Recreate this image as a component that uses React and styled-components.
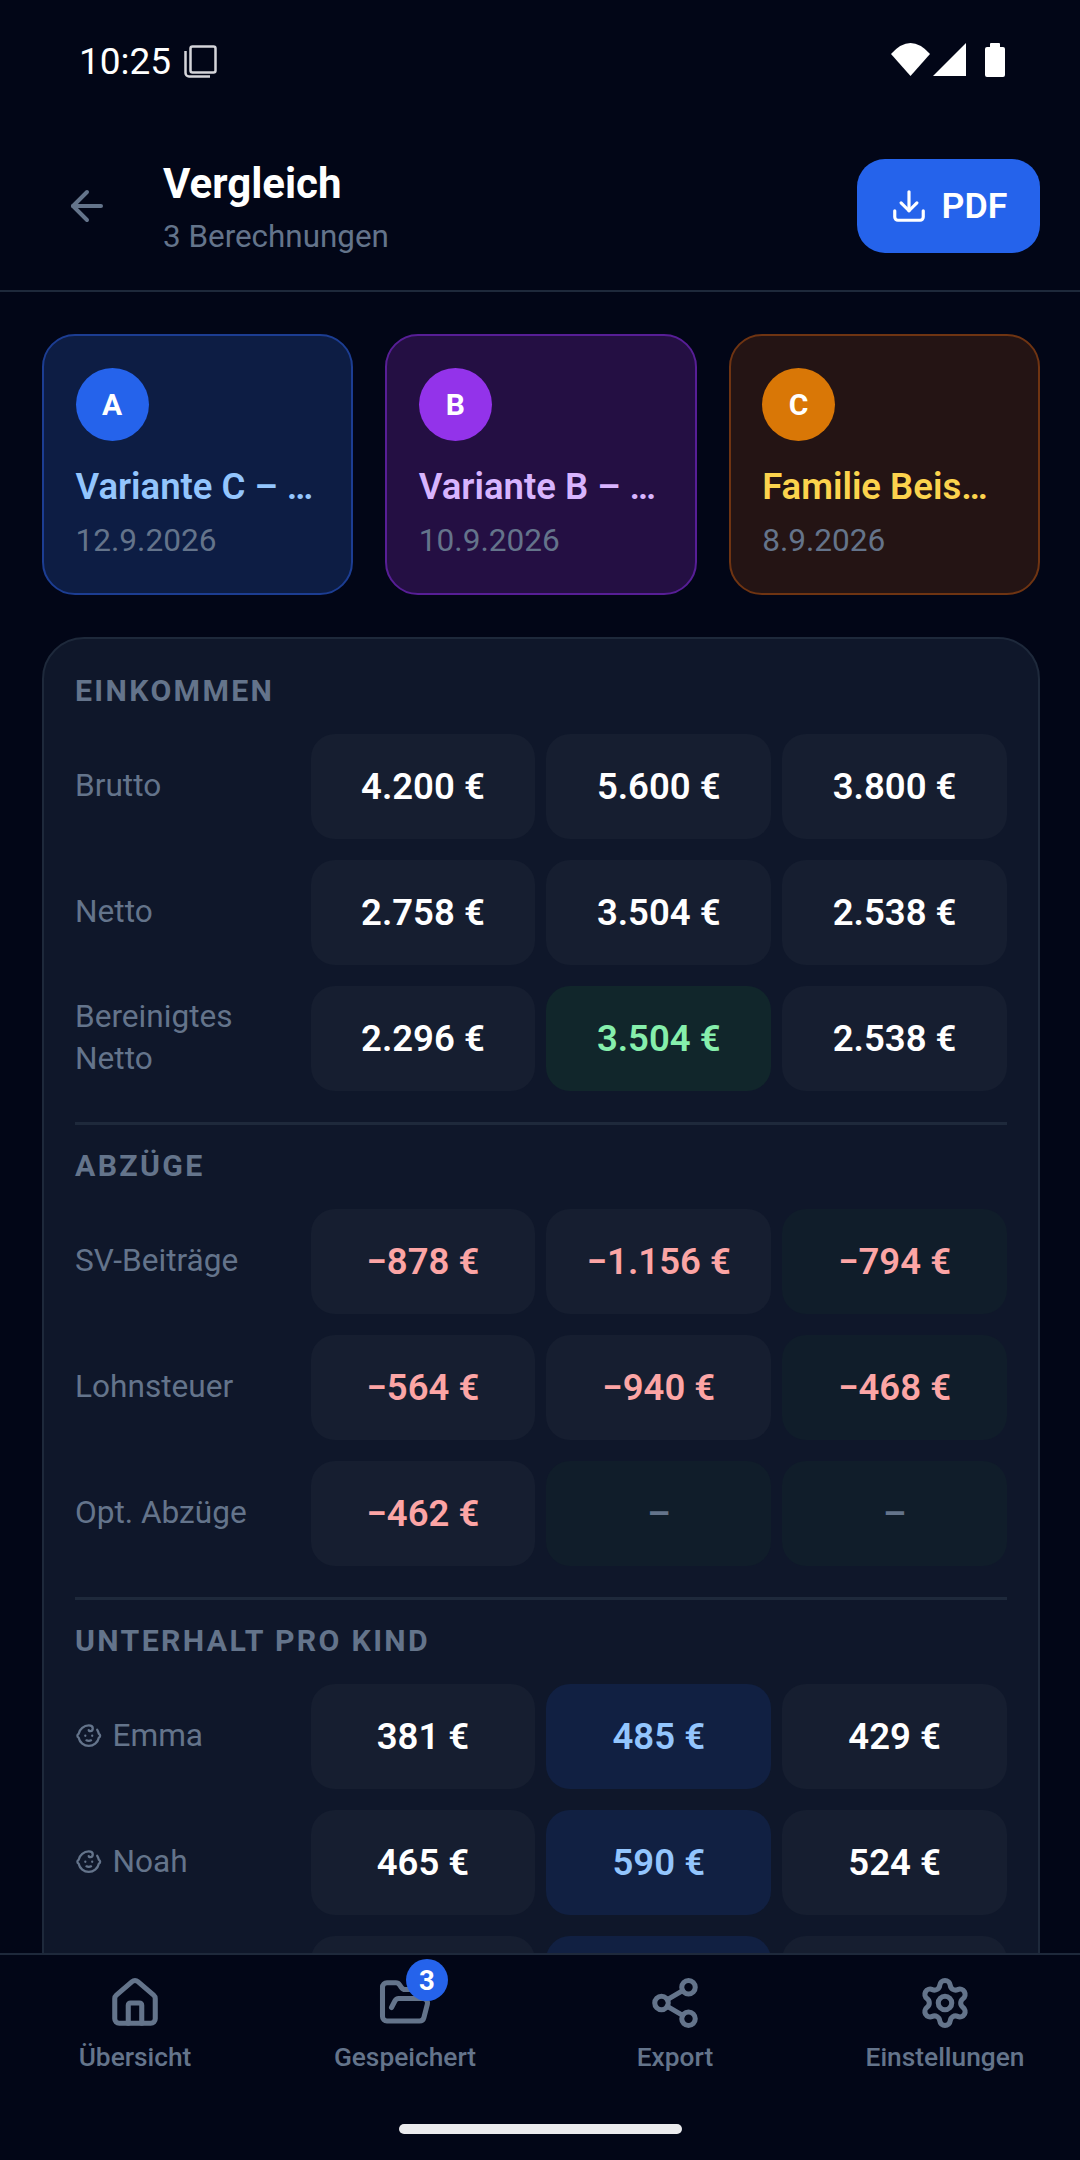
import styled, { createGlobalStyle } from 'styled-components';
import { ArrowLeft, Baby, Download, FolderOpen, House, Settings, Share2 } from 'lucide-react';

const sections = [
  {
    title: 'EINKOMMEN',
    rows: [
      { label: 'Brutto', cells: [['4.200 €'], ['5.600 €'], ['3.800 €']] },
      { label: 'Netto', cells: [['2.758 €'], ['3.504 €'], ['2.538 €']] },
      { label: 'Bereinigtes Netto', cells: [['2.296 €'], ['3.504 €', 'best'], ['2.538 €']] },
    ],
  },
  {
    title: 'ABZÜGE',
    rows: [
      { label: 'SV-Beiträge', cells: [['−878 €', 'minus'], ['−1.156 €', 'minus'], ['−794 €', 'minusLow']] },
      { label: 'Lohnsteuer', cells: [['−564 €', 'minus'], ['−940 €', 'minus'], ['−468 €', 'minusLow']] },
      { label: 'Opt. Abzüge', cells: [['−462 €', 'minus'], ['–', 'none'], ['–', 'none']] },
    ],
  },
  {
    title: 'UNTERHALT PRO KIND',
    rows: [
      { label: 'Emma', child: true, cells: [['381 €'], ['485 €', 'high'], ['429 €']] },
      { label: 'Noah', child: true, cells: [['465 €'], ['590 €', 'high'], ['524 €']] },
      { cells: [[''], ['', 'high'], ['']] },
    ],
  },
];

const variants = [
  { letter: 'A', name: 'Variante C – …', date: '12.9.2026', bg: '#0d1d44', line: '#1c3d92', accent: '#93c5fd', dot: '#2563eb' },
  { letter: 'B', name: 'Variante B – …', date: '10.9.2026', bg: '#240f43', line: '#571e96', accent: '#d8b4fe', dot: '#9333ea' },
  { letter: 'C', name: 'Familie Beis…', date: '8.9.2026', bg: '#241414', line: '#6f3412', accent: '#fcd34d', dot: '#d97706' },
];

const tabs = [
  { label: 'Übersicht', Icon: House },
  { label: 'Gespeichert', Icon: FolderOpen, badge: 3 },
  { label: 'Export', Icon: Share2 },
  { label: 'Einstellungen', Icon: Settings },
];

const cellTones = {
  plain: { bg: '#161e30', color: '#ffffff' },
  best: { bg: '#11262b', color: '#86efac' },
  minus: { bg: '#161e30', color: '#fca5a5' },
  minusLow: { bg: '#101d2a', color: '#fca5a5' },
  none: { bg: '#101d2a', color: '#64748b' },
  high: { bg: '#112042', color: '#93c5fd' },
};

function App() {
  return (
    <Screen>
      <GlobalStyle />
      <StatusBar>
        <StatusLeft>
          <Time>10:25</Time>
          <svg width="33" height="33" viewBox="0 0 33 33" fill="none" stroke="#d5d5da" strokeWidth="2.5">
            <rect x="6.5" y="1.500" width="25" height="26" rx="2" />
            <path d="M1.500 6v22a3.500 3.500 0 0 0 3.500 3.500h21" />
          </svg>
        </StatusLeft>
        <StatusIcons width="114" height="34" viewBox="0 0 114 34" fill="#fff">
          <path d="M0 11Q19.500-11 39 11L19.500 33Z" />
          <path d="M42 33 75 0V33Z" />
          <path d="M100 0h8a1 1 0 0 1 1 1v3h3a2 2 0 0 1 2 2v26a2 2 0 0 1-2 2H96a2 2 0 0 1-2-2V6a2 2 0 0 1 2-2h3V1a1 1 0 0 1 1-1z" />
        </StatusIcons>
      </StatusBar>

      <Header>
        <BackIcon>
          <ArrowLeft size={48} strokeWidth={2} />
        </BackIcon>
        <HeaderText>
          <Title>Vergleich</Title>
          <Subtitle>3 Berechnungen</Subtitle>
        </HeaderText>
        <PdfButton>
          <Download size={38} strokeWidth={2} />
          PDF
        </PdfButton>
      </Header>

      <Content>
        <VariantGrid>
          {variants.map((v) => (
            <VariantCard key={v.letter} $bg={v.bg} $line={v.line}>
              <Avatar $bg={v.dot}>{v.letter}</Avatar>
              <VariantName $color={v.accent}>{v.name}</VariantName>
              <VariantDate>{v.date}</VariantDate>
            </VariantCard>
          ))}
        </VariantGrid>

        <Table>
          {sections.map((section) => (
            <Section key={section.title}>
              <SectionTitle>{section.title}</SectionTitle>
              <Rows>
                {section.rows.map((row, i) => (
                  <Row key={i}>
                    <RowLabel>
                      {row.child && <Baby size={27.5} strokeWidth={2} />}
                      {row.label}
                    </RowLabel>
                    <Cells>
                      {row.cells.map(([value, tone], j) => (
                        <Cell key={j} $tone={tone || 'plain'}>{value}</Cell>
                      ))}
                    </Cells>
                  </Row>
                ))}
              </Rows>
            </Section>
          ))}
        </Table>
      </Content>

      <BottomNav>
        <Tabs>
          {tabs.map(({ label, Icon, badge }) => (
            <Tab key={label}>
              <TabIcon>
                <Icon size={54} strokeWidth={2.25} />
                {badge && <Badge>{badge}</Badge>}
              </TabIcon>
              <TabLabel>{label}</TabLabel>
            </Tab>
          ))}
        </Tabs>
        <HomeIndicator />
      </BottomNav>
    </Screen>
  );
}

const GlobalStyle = createGlobalStyle`
  html, body {
    margin: 0;
    background: #020617;
  }

  * {
    box-sizing: border-box;
  }
`

const Screen = styled.div`
  display: flex;
  flex-direction: column;
  width: 1080px;
  height: 2160px;
  overflow: hidden;
  background: #020617;
  color: #fff;
  font-family: Roboto, "Liberation Sans", sans-serif;
`

const StatusBar = styled.div`
  flex: none;
  display: flex;
  align-items: center;
  justify-content: space-between;
  height: 122px;
  padding: 0 75px 0 79px;
`

const StatusLeft = styled.div`
  display: flex;
  align-items: center;
  gap: 13px;
`

const StatusIcons = styled.svg`
  margin-bottom: 2px;
`

const Time = styled.span`
  font-size: 37px;
  color: #fff;
`

const Header = styled.header`
  flex: none;
  display: flex;
  align-items: center;
  height: 170px;
  padding: 0 40px 0 63px;
  border-bottom: 2px solid #1e293b;
`

const BackIcon = styled.div`
  display: flex;
  margin-right: 52px;
  color: #64748b;
`

const HeaderText = styled.div`
  flex: 1;
  padding-top: 3px;
`

const Title = styled.div`
  font-size: 42px;
  line-height: 52px;
  font-weight: 700;
  color: #fff;
`

const Subtitle = styled.div`
  margin-top: 7px;
  font-size: 31.4px;
  line-height: 40px;
  color: #64748b;
`

const PdfButton = styled.div`
  display: flex;
  align-items: center;
  justify-content: center;
  gap: 14px;
  width: 183px;
  height: 94px;
  border-radius: 28px;
  background: #2563eb;
  color: #fff;
  font-size: 35.75px;
  font-weight: 600;
`

const Content = styled.main`
  flex: 1;
  min-height: 0;
  overflow: hidden;
  padding: 42px 40px 0 42px;
`

const VariantGrid = styled.div`
  display: grid;
  grid-template-columns: repeat(3, 1fr);
  gap: 32px;
  margin-bottom: 42px;
`

const VariantCard = styled.div`
  height: 261px;
  padding: 32px 31.500px;
  border: 2px solid ${(p) => p.$line};
  border-radius: 33px;
  background: ${(p) => p.$bg};
`

const Avatar = styled.div`
  display: flex;
  align-items: center;
  justify-content: center;
  width: 73px;
  height: 73px;
  border-radius: 50%;
  background: ${(p) => p.$bg};
  color: #fff;
  font-size: 30px;
  font-weight: 700;
`

const VariantName = styled.div`
  margin-top: 24px;
  font-size: 36.5px;
  line-height: 44px;
  font-weight: 600;
  white-space: nowrap;
  color: ${(p) => p.$color};
`

const VariantDate = styled.div`
  margin-top: 12px;
  font-size: 31.6px;
  line-height: 40px;
  color: #64748b;
`

const Table = styled.div`
  padding: 32px 31px 0 31px;
  border: 2px solid #1e293b;
  border-radius: 42px;
  background: #0f172a;
`

const Section = styled.section`
  margin-bottom: 21px;
  padding-bottom: 31px;
  border-bottom: 3px solid #1e293b;

  &:last-child {
    margin-bottom: 0;
    border-bottom: 0;
  }
`

const SectionTitle = styled.h3`
  margin: 0 0 23px;
  font-size: 30.25px;
  line-height: 40px;
  font-weight: 700;
  letter-spacing: 2.35px;
  color: #64748b;
`

const Rows = styled.div`
  display: flex;
  flex-direction: column;
  gap: 21px;
`

const Row = styled.div`
  display: flex;
  align-items: center;
`

const RowLabel = styled.div`
  display: flex;
  align-items: center;
  gap: 10px;
  flex: none;
  width: 235.500px;
  padding: 0 40px 2px 0;
  font-size: 31.6px;
  line-height: 42px;
  color: #64748b;
`

const Cells = styled.div`
  flex: 1;
  display: grid;
  grid-template-columns: repeat(3, 1fr);
  gap: 11px;
`

const Cell = styled.div`
  display: flex;
  align-items: center;
  justify-content: center;
  height: 105px;
  border-radius: 24px;
  background: ${(p) => cellTones[p.$tone].bg};
  color: ${(p) => cellTones[p.$tone].color};
  font-size: 36.5px;
  font-weight: 600;
`

const BottomNav = styled.nav`
  flex: none;
  height: 207px;
  border-top: 2px solid #1e293b;
  background: #020617;
`

const Tabs = styled.div`
  display: grid;
  grid-template-columns: repeat(4, 1fr);
  padding-top: 21px;
`

const Tab = styled.div`
  display: flex;
  flex-direction: column;
  align-items: center;
  color: #64748b;
`

const TabIcon = styled.div`
  position: relative;
  display: flex;
`

const Badge = styled.span`
  position: absolute;
  top: -17px;
  right: -16px;
  display: flex;
  align-items: center;
  justify-content: center;
  width: 42px;
  height: 42px;
  border-radius: 50%;
  background: #2563eb;
  color: #fff;
  font-size: 27.5px;
  font-weight: 700;
`

const TabLabel = styled.span`
  margin-top: 9px;
  font-size: 26.3px;
  line-height: 36px;
  font-weight: 500;
`

const HomeIndicator = styled.div`
  width: 283px;
  height: 10px;
  margin: 49px auto 0;
  border-radius: 5px;
  background: #ebebee;
`

export default App;
